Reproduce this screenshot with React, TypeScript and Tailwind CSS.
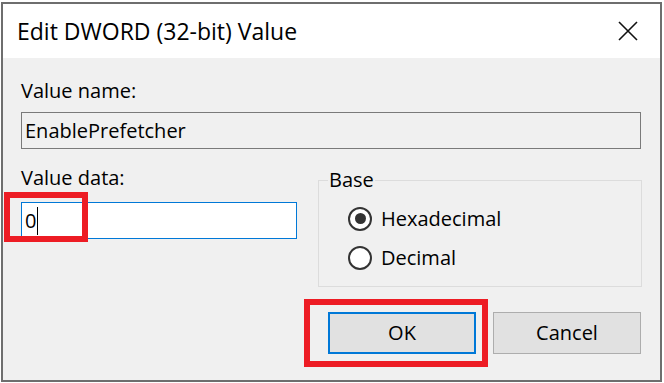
const font = { fontFamily: '"Open Sans", "Noto Sans", sans-serif' };

const Radio = ({ checked, label }: { checked?: boolean; label: string }) => (
  <div className="flex items-center h-[39px]">
    <div className="w-[24px] h-[24px] rounded-full border-2 border-[#333] bg-white flex items-center justify-center">
      {checked && <div className="w-[11px] h-[11px] rounded-full bg-[#333]" />}
    </div>
    <span className="ml-[9px] text-[20px] leading-[26px] text-black">{label}</span>
  </div>
);

export default function App() {
  return (
    <div className="w-[664px] h-[383px] bg-white overflow-hidden" style={font}>
      <div className="ml-[1px] mt-[2px] w-[661px] h-[380px] border-2 border-[#6e6e6e] flex flex-col">
        {/* title bar */}
        <div className="h-[54px] bg-white flex items-center justify-between pl-[14px] pr-[22px]">
          <span className="text-[23px] leading-[30px] text-black">Edit DWORD (32-bit) Value</span>
          <svg width="20" height="20" viewBox="0 0 20 20">
            <path d="M1 1L19 19M19 1L1 19" stroke="#111" strokeWidth="1.6" fill="none" />
          </svg>
        </div>

        {/* body */}
        <div className="flex-1 bg-[#f0f0f0] pl-[18px] pr-[18px]">
          <div className="mt-[20px] text-[20px] leading-[26px] text-black">Value name:</div>
          <div className="mt-[8px] h-[37px] w-[620px] border border-[#7a7a7a] bg-[#f0f0f0] pl-[3px] flex items-center text-[20px] text-black">
            EnablePrefetcher
          </div>

          <div className="flex mt-[16px]">
            <div className="w-[276px]">
              <div className="text-[20px] leading-[26px] text-black">Value data:</div>
              <div className="relative mt-[11px] w-[276px] h-[37px] border border-[#0078d7] bg-white pl-[3px] flex items-center text-[20px] text-black">
                <span>0</span>
                <span className="ml-[1px] w-[1px] h-[28px] bg-black" />
                <div className="absolute left-[-18px] top-[-11px] w-[84px] h-[50px] border-[6px] border-[#ed1c24]" />
              </div>
            </div>
            <fieldset className="ml-[21px] mt-[2px] w-[324px] h-[120px] border border-[#dcdcdc]">
              <legend className="ml-[9px] px-[1px] text-[20px] leading-[26px] text-black">Base</legend>
              <div className="pl-[29px] pt-[6px]">
                <Radio checked label="Hexadecimal" />
                <Radio label="Decimal" />
              </div>
            </fieldset>
          </div>

          <div className="flex mt-[25px] ml-[307px] gap-[17px]">
            <div className="relative">
              <div className="w-[148px] h-[42px] border-2 border-[#0078d7] bg-[#e1e1e1] flex items-center justify-center text-[20px] text-black">
                OK
              </div>
              <div className="absolute left-[-24px] top-[-13px] w-[184px] h-[68px] border-[6px] border-[#ed1c24]" />
            </div>
            <div className="w-[148px] h-[42px] border border-[#adadad] bg-[#e1e1e1] flex items-center justify-center text-[20px] text-black">
              Cancel
            </div>
          </div>
        </div>
      </div>
    </div>
  );
}
